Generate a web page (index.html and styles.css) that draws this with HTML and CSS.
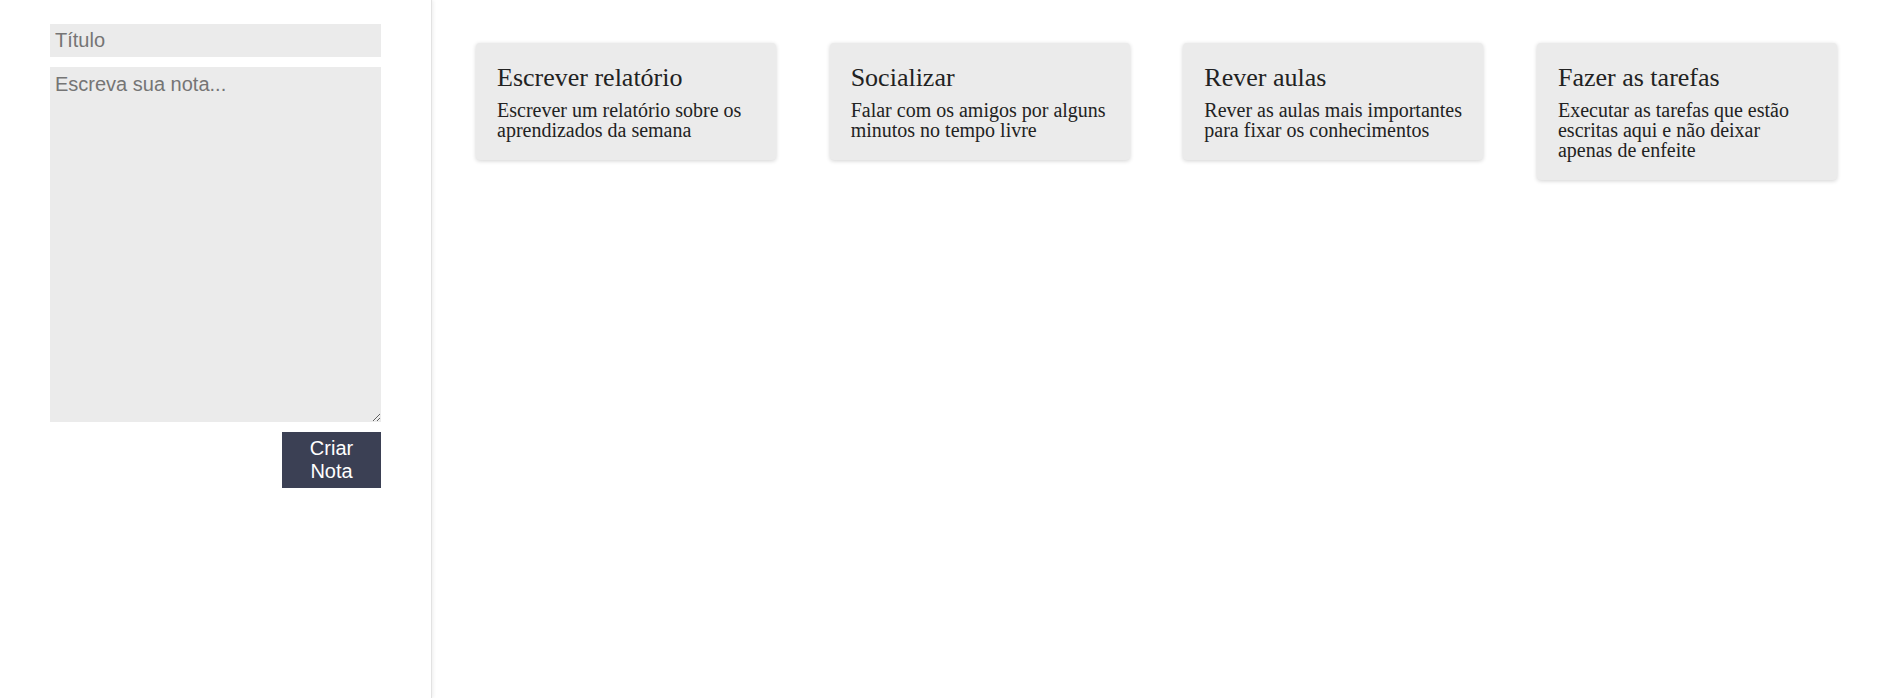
FILE: index.html
```html
<!DOCTYPE html>
<html lang="pt-BR">
<head>
<meta charset="utf-8">
<title>Notas</title>
<link rel="stylesheet" href="styles.css">
</head>
<body>
<div class="app">
  <aside class="sidebar">
    <form class="note-form">
      <input class="field field-title" type="text" placeholder="Título">
      <textarea class="field field-body" placeholder="Escreva sua nota..."></textarea>
      <div class="actions">
        <button class="btn" type="button">Criar Nota</button>
      </div>
    </form>
  </aside>
  <main class="notes">
    <article class="note">
      <h2 class="note-title">Escrever relatório</h2>
      <p class="note-text">Escrever um relatório sobre os aprendizados da semana</p>
    </article>
    <article class="note">
      <h2 class="note-title">Socializar</h2>
      <p class="note-text">Falar com os amigos por alguns minutos no tempo livre</p>
    </article>
    <article class="note">
      <h2 class="note-title">Rever aulas</h2>
      <p class="note-text">Rever as aulas mais importantes para fixar os conhecimentos</p>
    </article>
    <article class="note">
      <h2 class="note-title">Fazer as tarefas</h2>
      <p class="note-text">Executar as tarefas que estão escritas aqui e não deixar apenas de enfeite</p>
    </article>
  </main>
</div>
</body>
</html>
```
FILE: styles.css
```css
* { box-sizing: border-box; }
html, body { margin: 0; padding: 0; background: #fff; }
body { font-family: "Liberation Serif", "Times New Roman", serif; }

.app {
  display: flex;
  min-height: 100vh;
  height: 698px;
}

.sidebar {
  width: 432px;
  flex: 0 0 432px;
  padding: 24px 51px 0 50px;
  border-right: 1px solid #e2e2e2;
  box-shadow: 1px 0 4px rgba(0, 0, 0, 0.08);
}

.note-form {
  display: flex;
  flex-direction: column;
  gap: 10px;
}

.field {
  display: block;
  width: 331px;
  border: none;
  outline: none;
  background: #ebebeb;
  font-family: "Liberation Sans", Arial, sans-serif;
  font-size: 20px;
  color: #333;
  padding: 5px 5px;
  margin: 0;
}
.field::placeholder { color: #757575; }
.field-title { height: 33px; line-height: 23px; }
.field-body { height: 355px; line-height: 23px; padding-top: 6px; resize: vertical; }

.actions {
  display: flex;
  justify-content: flex-end;
  width: 331px;
}

.btn {
  width: 99px;
  height: 56px;
  border: none;
  background: #3b4054;
  color: #fff;
  font-family: "Liberation Sans", Arial, sans-serif;
  font-size: 20px;
  line-height: 23px;
  padding: 5px;
  text-align: center;
  cursor: pointer;
}

.notes {
  flex: 1;
  display: grid;
  grid-template-columns: repeat(4, 300px);
  column-gap: 53.67px;
  align-items: start;
  align-content: start;
  padding: 43px 0 0 44px;
}

.note {
  width: 300px;
  background: #ebebeb;
  border-radius: 4px;
  box-shadow: 0 1px 4px rgba(0, 0, 0, 0.18);
  padding: 20px 21px 20px;
  color: #222;
}

.note-title {
  margin: 0 0 7px;
  font-size: 26px;
  font-weight: normal;
  line-height: 30px;
}

.note-text {
  margin: 0;
  font-size: 20px;
  line-height: 20px;
}
```
